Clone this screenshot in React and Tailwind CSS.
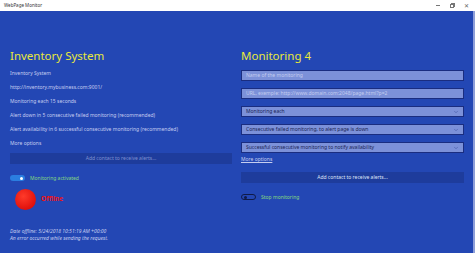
import { ChevronDown } from 'lucide-react';

const font = { fontFamily: '"Noto Sans", "Open Sans", sans-serif' };

function Field({ text, select, dark }) {
    return (
        <div className="flex h-[11px] items-center justify-between border border-[#1a2d80] bg-[#7c91d9] px-[4px]">
            <span className={`text-[5px] leading-none ${dark ? 'text-[#1a2455]' : 'text-[#c3ccef]'}`}>{text}</span>
            {select && <ChevronDown className="h-[6px] w-[6px] text-[#3b4c9a]" strokeWidth={2} />}
        </div>
    );
}

function TitleBar() {
    return (
        <div className="flex h-[11px] shrink-0 items-center justify-between bg-white pl-[4px] pr-[6px]">
            <span className="text-[4.5px] leading-none text-[#333]">WebPage Monitor</span>
            <div className="flex items-center gap-[10px] text-[#666]">
                <span className="block h-[1px] w-[4px] bg-[#777]" />
                <span className="relative block h-[4px] w-[4px] border border-[#777]">
                    <span className="absolute -right-[2px] -top-[2px] block h-[4px] w-[4px] border-r border-t border-[#777]" />
                </span>
                <span className="text-[6px] leading-none">✕</span>
            </div>
        </div>
    );
}

export default function App() {
    const details = [
        'Inventory System',
        'http://inventory.mybusiness.com:9001/',
        'Monitoring each 15 seconds',
        'Alert down in 5 consecutive failed monitoring (recommended)',
        'Alert availability in 6 successful consecutive monitoring (recommended)',
        'More options',
    ];

    return (
        <div className="flex h-[253px] w-[475px] flex-col overflow-hidden" style={font}>
            <TitleBar />
            <div className="flex flex-1 bg-[#2347b4]">
                <div className="flex flex-1 gap-[9px] pl-[10px] pr-[8px] pt-[37px]">
                    {/* left: monitor details */}
                    <div className="flex w-[222px] flex-col">
                        <h1 className="h-[16px] text-[11.5px] leading-[16px] text-[#e8e83c]">Inventory System</h1>
                        <div className="mt-[2px] flex flex-col">
                            {details.map((d) => (
                                <div key={d} className="h-[14px] text-[5px] leading-[14px] text-[#c5cdf0]">{d}</div>
                            ))}
                        </div>
                        <div className="mt-[3px] flex h-[11px] items-center justify-center bg-[#1e3c9c] text-[5px] text-[#7f90cf]">
                            Add contact to receive alerts...
                        </div>
                        <div className="mt-[10px] flex h-[8px] items-center gap-[5px]">
                            <div className="flex h-[6px] w-[15px] items-center justify-end rounded-full bg-[#2b7ee0] pr-[2px]">
                                <span className="block h-[3px] w-[3px] rounded-full bg-white" />
                            </div>
                            <span className="text-[5px] leading-none text-[#86d77f]">Monitoring activated</span>
                        </div>
                        <div className="ml-[5px] mt-[7px] flex items-center gap-[5px]">
                            <span className="block h-[21px] w-[21px] rounded-full bg-[radial-gradient(circle_at_40%_35%,#ff3a2a,#d40000)]" />
                            <span className="text-[6.5px] font-bold leading-none text-[#ee1414]">Offline</span>
                        </div>
                        <div className="mt-[18px] flex flex-col text-[5px] italic leading-[7px] text-[#c5cdf0]">
                            <span>Date offline: 5/24/2018 10:51:19 AM +00:00</span>
                            <span>An error occurred while sending the request.</span>
                        </div>
                    </div>

                    {/* right: new monitoring form */}
                    <div className="flex w-[223px] flex-col">
                        <h1 className="h-[16px] text-[11.5px] leading-[16px] text-[#e8e83c]">Monitoring 4</h1>
                        <div className="mt-[6px] flex flex-col gap-[7px]">
                            <Field text="Name of the monitoring" />
                            <Field text="URL, exemple: http://www.domain.com:2048/page.html?p=2" />
                            <Field text="Monitoring each" select dark />
                            <Field text="Consecutive failed monitoring, to alert page is down" select dark />
                            <Field text="Successful consecutive monitoring to notify availability" select dark />
                        </div>
                        <div className="mt-[2px] h-[8px] text-[5px] leading-[8px] text-[#c5cdf0] underline">More options</div>
                        <div className="mt-[9px] flex h-[11px] items-center justify-center bg-[#1e3c9c] text-[5px] text-[#dfe4f8]">
                            Add contact to receive alerts...
                        </div>
                        <div className="mt-[10px] flex h-[8px] items-center gap-[5px]">
                            <div className="flex h-[6px] w-[15px] items-center rounded-full border border-[#0f1a48] pl-[2px]">
                                <span className="block h-[3px] w-[3px] rounded-full bg-[#0f1a48]" />
                            </div>
                            <span className="text-[5px] leading-none text-[#86d77f]">Stop monitoring</span>
                        </div>
                    </div>
                </div>
                <div className="w-[2px] bg-[#8d9ed8]" />
            </div>
        </div>
    );
}
